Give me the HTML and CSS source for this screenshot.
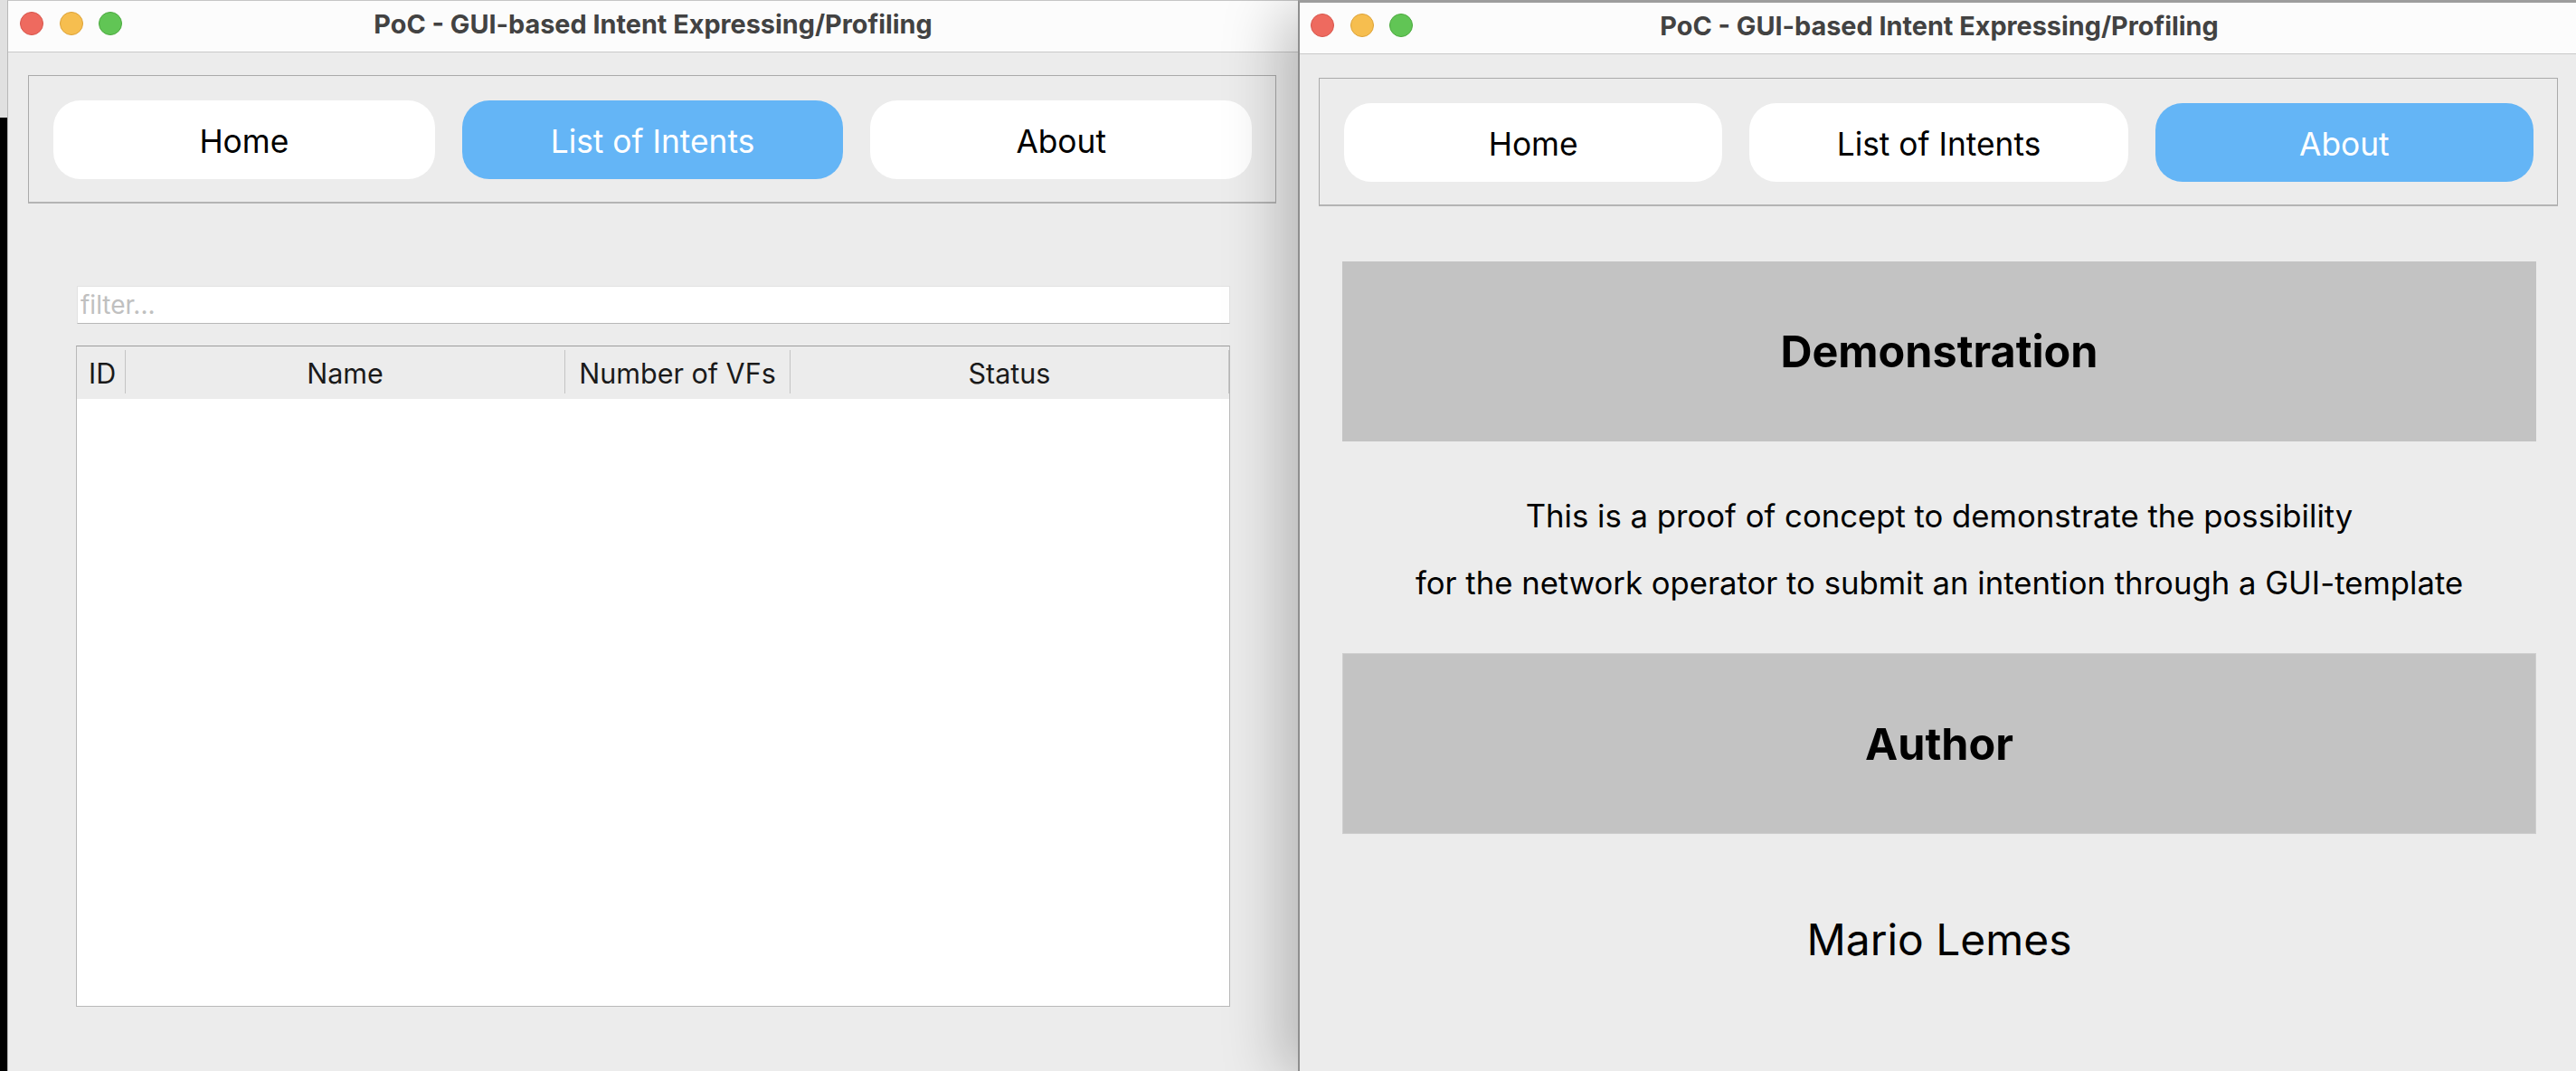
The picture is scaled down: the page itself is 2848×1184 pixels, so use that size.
FILE: index.html
```html
<!DOCTYPE html>
<html lang="en">
<head>
<meta charset="utf-8">
<title>PoC - GUI-based Intent Expressing/Profiling</title>
<link rel="stylesheet" href="styles.css">
</head>
<body>
<div class="desktop">
  <div class="win win-left">
    <div class="titlebar">
      <div class="lights">
        <span class="light red"></span>
        <span class="light yellow"></span>
        <span class="light green"></span>
      </div>
      <div class="title">PoC - GUI-based Intent Expressing/Profiling</div>
      <div></div>
    </div>
    <div class="content content-left">
      <div class="navbox">
        <button class="tab">Home</button>
        <button class="tab active">List of Intents</button>
        <button class="tab">About</button>
      </div>
      <div class="list-page">
        <input class="filter" type="text" placeholder="filter...">
        <div class="table">
          <div class="thead">
            <div class="th th-id">ID</div>
            <div class="sep"></div>
            <div class="th">Name</div>
            <div class="sep"></div>
            <div class="th">Number of VFs</div>
            <div class="sep"></div>
            <div class="th">Status</div>
            <div class="sep"></div>
          </div>
          <div class="tbody"></div>
        </div>
      </div>
    </div>
  </div>

  <div class="win win-right">
    <div class="titlebar">
      <div class="lights">
        <span class="light red"></span>
        <span class="light yellow"></span>
        <span class="light green"></span>
      </div>
      <div class="title">PoC - GUI-based Intent Expressing/Profiling</div>
      <div></div>
    </div>
    <div class="content content-right">
      <div class="navbox">
        <button class="tab">Home</button>
        <button class="tab">List of Intents</button>
        <button class="tab active">About</button>
      </div>
      <div class="about">
        <div class="section-head">Demonstration</div>
        <div class="desc">
          <div>This is a proof of concept to demonstrate the possibility</div>
          <div>for the network operator to submit an intention through a GUI-template</div>
        </div>
        <div class="section-head section-author">Author</div>
        <div class="author-name">Mario Lemes</div>
      </div>
    </div>
  </div>
</div>
</body>
</html>
```

FILE: styles.css
```css
* {
  box-sizing: border-box;
}

html,
body {
  margin: 0;
  padding: 0;
}

body {
  width: 2848px;
  height: 1184px;
  overflow: hidden;
  background: linear-gradient(to bottom, #e0e0e0 0, #e0e0e0 130px, #000 130px);
  font-family: "Inter", "Liberation Sans", sans-serif;
  color: #000;
}

.desktop {
  display: flex;
  align-items: flex-start;
  padding-left: 8px;
  height: 1184px;
}

.win {
  flex-shrink: 0;
  height: 1200px;
  background: #ececec;
  display: flex;
  flex-direction: column;
}

.win-left {
  width: 1427px;
  border-left: 1px solid #b8b8b8;
  border-top: 1px solid #c6c6c6;
}

.win-right {
  width: 1416px;
  border-left: 2px solid #8e8e8e;
  border-top: 3px solid #9d9d9d;
  position: relative;
  z-index: 1;
  box-shadow: -30px 0 60px -10px rgba(0, 0, 0, 0.22);
}

/* title bar */
.titlebar {
  height: 57px;
  flex-shrink: 0;
  background: #fcfcfc;
  border-bottom: 1px solid #c9c9c9;
  display: grid;
  grid-template-columns: 1fr auto 1fr;
  align-items: center;
  padding: 0 13px 6px 13px;
}

.win-right .titlebar {
  padding-left: 12px;
  padding-right: 12px;
}

.lights {
  display: flex;
  gap: 17.5px;
}

.light {
  width: 26px;
  height: 26px;
  border-radius: 50%;
  display: block;
}

.light.red {
  background: #ee6a5f;
  border: 1px solid #d8544a;
}

.light.yellow {
  background: #f6be4f;
  border: 1px solid #dea236;
}

.light.green {
  background: #61c555;
  border: 1px solid #4aa93d;
}

.title {
  font-weight: 700;
  font-size: 28.8px;
  color: #424242;
  white-space: nowrap;
}

/* content */
.content-left {
  padding: 25px 24px 0 22px;
}

.content-right {
  padding: 26px 23px 0 21px;
}

.navbox {
  display: flex;
  gap: 30px;
  border: 1px solid #aaaaaa;
  border-bottom: 2px solid #b4b4b4;
  padding: 27px 26px 25px 27px;
}

.tab {
  flex: 1;
  height: 87px;
  border: none;
  border-radius: 30px;
  background: #ffffff;
  font-family: "Inter", "Liberation Sans", sans-serif;
  font-size: 35.3px;
  font-weight: 400;
  color: #000;
  padding: 3px 0 0;
}

.tab.active {
  background: #64b5f6;
  color: #ffffff;
}

/* list page */
.list-page {
  display: flex;
  flex-direction: column;
  gap: 24px;
  padding: 91px 51px 0 53px;
}

.filter {
  align-self: stretch;
  margin-left: 1px;
  height: 42px;
  background: #fff;
  border: 1px solid #e2e2e2;
  border-bottom: 1px solid #b8b8b8;
  padding: 0 3px;
  font-family: "Inter", "Liberation Sans", sans-serif;
  font-size: 28px;
  color: #000;
  outline: none;
}

.filter::placeholder {
  color: #c0c0c0;
}

.table {
  height: 731px;
  background: #fff;
  border: 1px solid #b9b9b9;
  border-top-color: #9c9c9c;
  display: flex;
  flex-direction: column;
}

.thead {
  display: grid;
  grid-template-columns: 53px 1px 485px 1px 248px 1px 1fr 1px;
  height: 58px;
  background: #ececec;
  align-items: center;
}

.th {
  font-size: 30.5px;
  color: #1a1a1a;
  text-align: center;
  white-space: nowrap;
}

.th-id {
  text-align: left;
  padding-left: 13px;
}

.sep {
  align-self: stretch;
  margin: 4px 0 6px;
  background: #c4c4c4;
}

.tbody {
  flex: 1;
}

/* about page */
.about {
  display: flex;
  flex-direction: column;
  padding: 61px 24px 0 26px;
}

.section-head {
  height: 199px;
  background: #c3c3c3;
  display: flex;
  align-items: center;
  justify-content: center;
  font-size: 48.5px;
  font-weight: 700;
  color: #000;
}

.section-author {
  height: 200px;
  border: 1px solid #cfcfcf;
}

.desc {
  margin: 45px 0 41px;
  text-align: center;
  font-size: 34.7px;
  line-height: 74px;
  color: #000;
}

.author-name {
  margin-top: 87px;
  text-align: center;
  font-size: 47.9px;
  line-height: 60px;
  color: #000;
}
```
